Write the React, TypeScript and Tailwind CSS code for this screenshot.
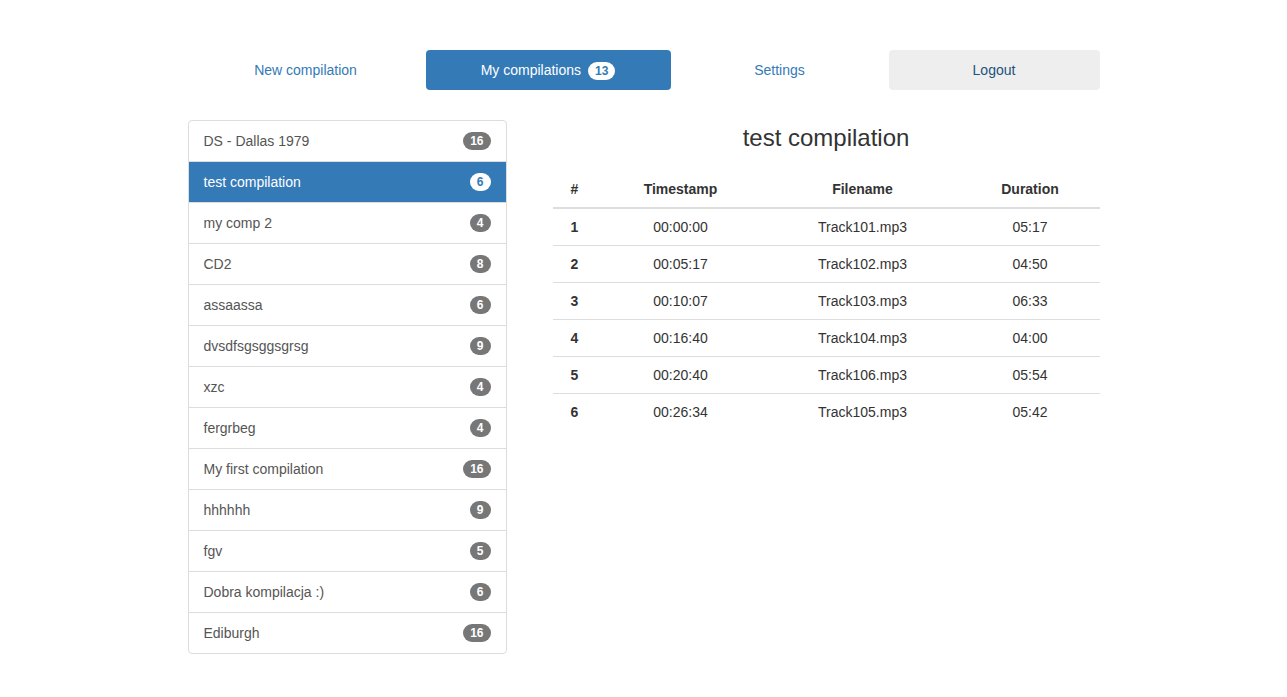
const compilations = [
  { name: "DS - Dallas 1979", count: 16 },
  { name: "test compilation", count: 6, active: true },
  { name: "my comp 2", count: 4 },
  { name: "CD2", count: 8 },
  { name: "assaassa", count: 6 },
  { name: "dvsdfsgsggsgrsg", count: 9 },
  { name: "xzc", count: 4 },
  { name: "fergrbeg", count: 4 },
  { name: "My first compilation", count: 16 },
  { name: "hhhhhh", count: 9 },
  { name: "fgv", count: 5 },
  { name: "Dobra kompilacja :)", count: 6 },
  { name: "Ediburgh", count: 16 },
];

const tracks = [
  { n: 1, ts: "00:00:00", file: "Track101.mp3", dur: "05:17" },
  { n: 2, ts: "00:05:17", file: "Track102.mp3", dur: "04:50" },
  { n: 3, ts: "00:10:07", file: "Track103.mp3", dur: "06:33" },
  { n: 4, ts: "00:16:40", file: "Track104.mp3", dur: "04:00" },
  { n: 5, ts: "00:20:40", file: "Track106.mp3", dur: "05:54" },
  { n: 6, ts: "00:26:34", file: "Track105.mp3", dur: "05:42" },
];

function Badge({ value, inverse }: { value: number; inverse?: boolean }) {
  return (
    <span
      className={
        "inline-block rounded-[10px] px-[7px] py-[3px] text-[12px] font-bold leading-none " +
        (inverse ? "bg-white text-[#337ab7]" : "bg-[#777] text-white")
      }
    >
      {value}
    </span>
  );
}

export default function App() {
  return (
    <div
      className="min-h-[697px] bg-white text-[14px] leading-[20px] text-[#333]"
      style={{ fontFamily: '"Liberation Sans", Arial, sans-serif' }}
    >
      <div className="mx-auto w-[912px] pt-[50px]">
        <nav className="flex gap-[2px]">
          <a href="#" className="flex h-10 w-[236px] items-center justify-center rounded px-[15px] text-[#337ab7]">
            New compilation
          </a>
          <a href="#" className="flex h-10 w-[245px] items-center justify-center rounded bg-[#337ab7] px-[15px] text-white">
            My compilations
            <span className="ml-[7px]">
              <Badge value={13} inverse />
            </span>
          </a>
          <a href="#" className="flex h-10 w-[214px] items-center justify-center rounded px-[15px] text-[#337ab7]">
            Settings
          </a>
          <a href="#" className="flex h-10 w-[211px] items-center justify-center rounded bg-[#eee] px-[15px] text-[#23527c]">
            Logout
          </a>
        </nav>

        <div className="mt-[30px] flex gap-[46px]">
          <ul className="w-[319px] shrink-0 rounded border border-[#ddd]">
            {compilations.map((c, i) => (
              <li
                key={c.name}
                className={
                  "flex items-center justify-between px-[15px] py-[10px] " +
                  (i > 0 ? "border-t border-[#ddd] " : "") +
                  (c.active ? "bg-[#337ab7] text-white" : "text-[#555]")
                }
              >
                <span>{c.name}</span>
                <Badge value={c.count} inverse={c.active} />
              </li>
            ))}
          </ul>

          <div className="flex-1">
            <h3 className="mt-[5px] mb-[20px] text-center text-[24px] leading-[26px] text-[#333]">
              test compilation
            </h3>
            <table className="w-full border-collapse text-center">
              <thead>
                <tr className="border-b-2 border-[#ddd] font-bold">
                  <th className="w-[44px] p-2">#</th>
                  <th className="w-[168px] p-2">Timestamp</th>
                  <th className="w-[196px] p-2">Filename</th>
                  <th className="w-[139px] p-2">Duration</th>
                </tr>
              </thead>
              <tbody>
                {tracks.map((t, i) => (
                  <tr key={t.n} className={i > 0 ? "border-t border-[#ddd]" : ""}>
                    <td className="p-2 font-bold">{t.n}</td>
                    <td className="p-2">{t.ts}</td>
                    <td className="p-2">{t.file}</td>
                    <td className="p-2">{t.dur}</td>
                  </tr>
                ))}
              </tbody>
            </table>
          </div>
        </div>
      </div>
    </div>
  );
}
